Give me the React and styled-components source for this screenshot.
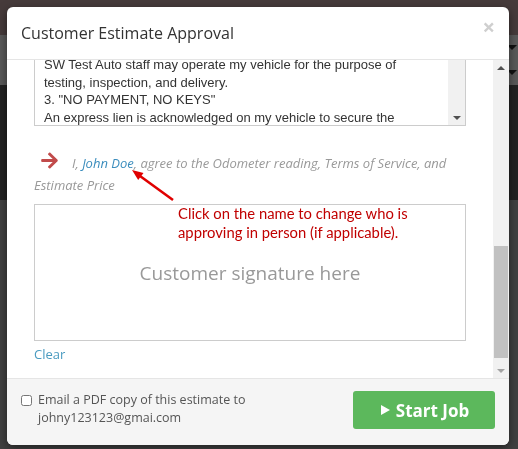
import React, { useLayoutEffect, useRef, useState } from 'react';
import styled, { createGlobalStyle } from 'styled-components';
import { FaArrowRight } from 'react-icons/fa';

const GlobalStyle = createGlobalStyle`
  html, body { margin: 0; padding: 0; }
  body {
    width: 518px;
    height: 449px;
    overflow: hidden;
    font-family: "Open Sans", "Liberation Sans", sans-serif;
  }
`;

// --- the dimmed page behind the dialog ---
const Backdrop = styled.div`
  width: 518px;
  height: 449px;
  display: flex;
  flex-direction: column;
  overflow: hidden;
`;

const Band = styled.div`
  height: ${p => p.$h}px;
  flex: ${p => (p.$grow ? 1 : 'none')};
  background: ${p => p.$bg};
  display: flex;
  flex-direction: column;
  align-items: flex-end;
  justify-content: space-around;
  padding-right: 1px;
`;

const Caret = styled.span`
  width: 0;
  height: 0;
  border-left: 5px solid transparent;
  border-right: 5px solid transparent;
  border-top: 5px solid #111;
`;

// --- classic scrollbar parts ---
const Track = styled.div`
  flex: none;
  width: ${p => p.$w}px;
  background: #f1f1f1;
  display: flex;
  flex-direction: column;
`;

const TrackArrow = styled.div`
  flex: none;
  height: 15px;
  display: flex;
  align-items: center;
  justify-content: center;
  &::before {
    content: '';
    width: 0;
    height: 0;
    border-left: 4px solid transparent;
    border-right: 4px solid transparent;
    ${p => (p.$down ? 'border-top' : 'border-bottom')}: 4px solid ${p => p.$color};
  }
`;

const ThumbRail = styled.div`
  flex: 1;
  position: relative;
`;

const Thumb = styled.div`
  position: absolute;
  left: 1px;
  right: 1px;
  background: #c1c1c1;
`;

// --- dialog ---
const Modal = styled.div`
  position: fixed;
  left: 7px;
  top: 7px;
  width: 502px;
  height: 438px;
  background: #fff;
  border-radius: 6px;
  box-shadow: 0 3px 10px rgba(0, 0, 0, 0.5);
  display: flex;
  flex-direction: column;
  overflow: hidden;
`;

const Header = styled.div`
  height: 53px;
  box-sizing: border-box;
  flex: none;
  padding: 0 14px 0 14px;
  border-bottom: 1px solid #e5e5e5;
  display: flex;
  align-items: center;
  justify-content: space-between;
  h4 {
    margin: 0;
    font-size: 16px;
    font-weight: 400;
    color: #333;
  }
`;

const Close = styled.button`
  align-self: flex-start;
  margin-top: 8px;
  border: 0;
  padding: 0;
  background: none;
  font-family: "Open Sans", sans-serif;
  font-size: 22px;
  font-weight: 700;
  line-height: 1;
  color: #cfcfcf;
`;

const BodyFrame = styled.div`
  flex: 1;
  min-height: 0;
  display: flex;
`;

const Viewport = styled.div`
  flex: 1;
  position: relative;
  overflow: hidden;
  padding: 18px 27px 29px 27px;
`;

const SummaryTitle = styled.h5`
  margin: 0 0 10px;
  font-size: 15px;
  font-weight: 600;
  color: #333;
`;

const SummaryRow = styled.div`
  display: flex;
  justify-content: space-between;
  padding: 7px 0;
  border-bottom: 1px solid #eee;
  font-size: 13px;
  color: ${p => (p.$total ? '#333' : '#555')};
  font-weight: ${p => (p.$total ? 700 : 400)};
`;

const Field = styled.div`
  margin: 18px 0;
  label {
    display: block;
    font-size: 13px;
    color: #555;
    margin-bottom: 5px;
  }
`;

const Input = styled.input`
  width: 100%;
  box-sizing: border-box;
  height: 32px;
  border: 1px solid #ccc;
  padding: 0 9px;
  font-size: 13px;
  font-family: inherit;
`;

const TermsLabel = styled.div`
  font-size: 13px;
  font-weight: 600;
  color: #555;
  margin-bottom: 6px;
`;

const TermsBox = styled.div`
  height: 150px;
  box-sizing: border-box;
  margin: 0 0 25px;
  border: 1px solid #ccc;
  display: flex;
`;

const Terms = styled.textarea`
  flex: 1;
  min-width: 0;
  margin: 0;
  padding: 6px 9px;
  border: 0;
  outline: none;
  resize: none;
  overflow: hidden;
  white-space: pre;
  font-family: "Liberation Sans", Arial, sans-serif;
  font-size: 13px;
  line-height: 17.5px;
  color: #333;
`;

const Agreement = styled.p`
  margin: 0 0 8px;
  font-size: 13px;
  line-height: 22px;
  font-style: italic;
  color: #999;
  svg {
    color: #c14b4b;
    font-size: 19px;
    margin: 0 13px 0 6px;
    vertical-align: -2px;
  }
  a {
    color: #3b8dbd;
    text-decoration: none;
  }
`;

const SignaturePad = styled.div`
  height: 137px;
  box-sizing: border-box;
  border: 1px solid #ccc;
  display: flex;
  align-items: center;
  justify-content: center;
  font-size: 19px;
  color: #999;
`;

const ClearLink = styled.a`
  display: inline-block;
  margin-top: 4px;
  font-size: 13px;
  line-height: 18px;
  color: #4a9bc0;
  text-decoration: none;
`;

const Footer = styled.div`
  flex: none;
  height: 67px;
  box-sizing: border-box;
  padding: 0 14px;
  border-top: 1px solid #e5e5e5;
  background: #f5f5f5;
  display: flex;
  align-items: center;
  justify-content: space-between;
`;

const EmailOption = styled.label`
  display: flex;
  align-items: flex-start;
  gap: 6px;
  font-size: 12.5px;
  line-height: 18px;
  color: #555;
  margin-top: -7px;
  input {
    width: 11px;
    height: 11px;
    margin: 4px 0 0;
  }
`;

const StartButton = styled.button`
  width: 142px;
  height: 38px;
  margin-top: -4px;
  border: 0;
  border-radius: 3px;
  background: #5cb85c;
  color: #fff;
  font-family: "Open Sans", sans-serif;
  font-size: 17px;
  font-weight: 700;
  display: flex;
  align-items: center;
  justify-content: center;
  gap: 6px;
  padding-left: 8px;
`;

const Play = styled.span`
  width: 0;
  height: 0;
  border-left: 9px solid #fff;
  border-top: 5.5px solid transparent;
  border-bottom: 5.5px solid transparent;
`;

// --- red help annotation drawn on top of the screenshot ---
const Note = styled.div`
  position: fixed;
  left: 178px;
  top: 204px;
  font-family: Lato, "Liberation Sans", sans-serif;
  font-size: 14.8px;
  line-height: 19px;
  color: #c00000;
  pointer-events: none;
`;

const NoteArrow = styled.svg`
  position: fixed;
  left: 0;
  top: 0;
  pointer-events: none;
`;

const termsText = [
  'AUTHORIZATION AND TERMS OF SERVICE',
  '',
  '1. "AUTHORIZATION"',
  'I hereby authorize SW Test Auto to perform the repair work',
  'described in this estimate, along with the necessary parts',
  'and materials. Prices listed are estimates only and any',
  'additional work will require my approval.',
  '2. "PERMISSION TO OPERATE"',
  'SW Test Auto staff may operate my vehicle for the purpose of',
  'testing, inspection, and delivery.',
  '3. "NO PAYMENT, NO KEYS"',
  'An express lien is acknowledged on my vehicle to secure the',
  'amount of repairs thereto. The vehicle will not be released',
  'until payment has been made in full.',
  '4. "STORAGE"',
  'A storage fee may be charged for vehicles left more than',
  'three (3) days after notice of completion.',
  '5. "PARTS"',
  'Replaced parts will be discarded unless requested at the',
  'time this estimate is approved.',
  '6. "WARRANTY"',
  'Warranty terms are provided on the final invoice.',
].join('\n');

const summary = [
  ['Labor', '$240.00'],
  ['Parts', '$186.45'],
  ['Shop Supplies', '$12.00'],
  ['Tax', '$15.38'],
];

// thumb size/offset for a track, from the scroll metrics of its viewport
const thumbFor = (el, trackLen) => {
  const size = Math.max(18, (trackLen * el.clientHeight) / el.scrollHeight);
  const max = el.scrollHeight - el.clientHeight;
  const top = max > 0 ? (el.scrollTop / max) * (trackLen - size) : 0;
  return { top, height: size };
};

export default function App() {
  const viewRef = useRef(null);
  const padRef = useRef(null);
  const termsRef = useRef(null);
  const [bodyThumb, setBodyThumb] = useState({ top: 0, height: 0 });
  const [termsThumb, setTermsThumb] = useState({ top: 0, height: 0 });

  useLayoutEffect(() => {
    const view = viewRef.current;
    // body scrolled down so the signature pad sits just under the terms
    view.scrollTop = padRef.current.offsetTop - 144;
    // terms box scrolled to section 2
    termsRef.current.scrollTop = 67;
    setBodyThumb(thumbFor(view, view.clientHeight - 30));
    setTermsThumb(thumbFor(termsRef.current, termsRef.current.clientHeight - 30));
  }, []);

  return (
    <>
      <GlobalStyle />
      <Backdrop>
        <Band $h={35} $bg="#463b3b" />
        <Band $h={50} $bg="#5a5a5a">
          <Caret />
          <Caret />
        </Band>
        <Band $h={115} $bg="#232323" />
        <Band $grow $bg="#414141" />
      </Backdrop>

      <Modal>
        <Header>
          <h4>Customer Estimate Approval</h4>
          <Close>×</Close>
        </Header>

        <BodyFrame>
          <Viewport ref={viewRef}>
            <SummaryTitle>Estimate #1042 — 2014 Honda Accord</SummaryTitle>
            {summary.map(([k, v]) => (
              <SummaryRow key={k}>
                <span>{k}</span>
                <span>{v}</span>
              </SummaryRow>
            ))}
            <SummaryRow $total>
              <span>Estimate Total</span>
              <span>$453.83</span>
            </SummaryRow>
            <Field>
              <label>Odometer reading</label>
              <Input defaultValue="84,512" />
            </Field>
            <Field>
              <label>Promised time</label>
              <Input defaultValue="Today, 5:00 PM" />
            </Field>
            <TermsLabel>Terms of Service</TermsLabel>
            <TermsBox>
              <Terms ref={termsRef} readOnly value={termsText} />
              <Track $w={17}>
                <TrackArrow $color="#505050" />
                <ThumbRail>
                  <Thumb style={termsThumb} />
                </ThumbRail>
                <TrackArrow $down $color="#505050" />
              </Track>
            </TermsBox>

            <Agreement>
              <FaArrowRight />
              I, <a href="#">John Doe</a>, agree to the Odometer reading, Terms of Service, and Estimate Price
            </Agreement>
            <SignaturePad ref={padRef}>Customer signature here</SignaturePad>
            <ClearLink href="#">Clear</ClearLink>
          </Viewport>
          <Track $w={16}>
            <TrackArrow $color="#505050" />
            <ThumbRail>
              <Thumb style={bodyThumb} />
            </ThumbRail>
            <TrackArrow $down $color="#a3a3a3" />
          </Track>
        </BodyFrame>

        <Footer>
          <EmailOption>
            <input type="checkbox" />
            <span>
              Email a PDF copy of this estimate to
              <br />
              johny123123@gmai.com
            </span>
          </EmailOption>
          <StartButton>
            <Play />
            Start Job
          </StartButton>
        </Footer>
      </Modal>

      <NoteArrow width="518" height="449">
        <line x1="173" y1="200" x2="140" y2="176" stroke="#e00000" strokeWidth="2.5" />
        <polygon points="132,170 143.5,172.9 138.2,180.1" fill="#e00000" />
      </NoteArrow>
      <Note>
        Click on the name to change who is
        <br />
        approving in person (if applicable).
      </Note>
    </>
  );
}
